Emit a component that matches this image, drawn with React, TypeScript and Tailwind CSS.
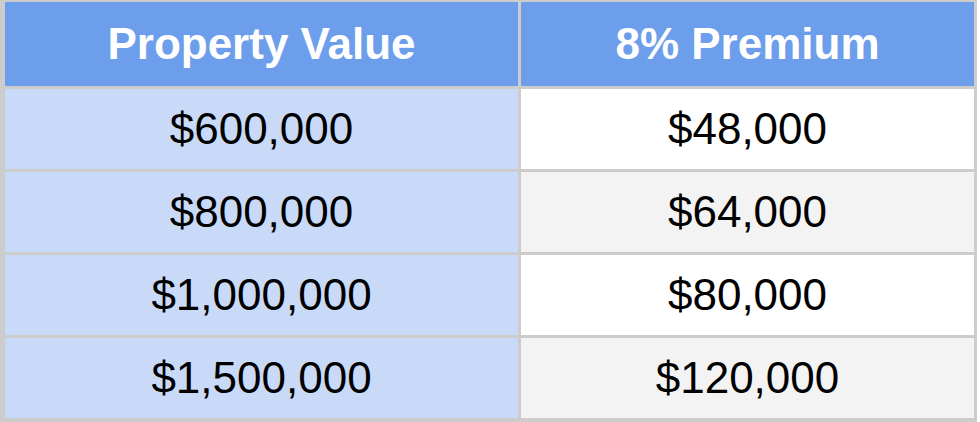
import React from 'react';

const rows = [
  { value: '$600,000', premium: '$48,000' },
  { value: '$800,000', premium: '$64,000' },
  { value: '$1,000,000', premium: '$80,000' },
  { value: '$1,500,000', premium: '$120,000' },
];

const App: React.FC = () => {
  return (
    <div className="w-[980px] h-[422px] bg-white" style={{ fontFamily: '"Liberation Sans", Arial, sans-serif' }}>
      <div className="w-[977px] bg-[#cccccc] pt-[2px] pl-[5px] pr-[3px] pb-[4px]">
        <div className="grid grid-cols-[513px_453px] gap-[3px] text-[44px] leading-none">
          {/* Header */}
          <div className="h-[84px] bg-[#6d9eeb] text-white font-bold flex items-center justify-center">
            Property Value
          </div>
          <div className="h-[84px] bg-[#6d9eeb] text-white font-bold flex items-center justify-center">
            8% Premium
          </div>

          {/* Rows */}
          {rows.map((row, i) => (
            <React.Fragment key={row.value}>
              <div className="h-[80px] bg-[#c9daf8] text-black flex items-center justify-center">
                {row.value}
              </div>
              <div
                className={`h-[80px] text-black flex items-center justify-center ${
                  i % 2 === 0 ? 'bg-white' : 'bg-[#f3f3f3]'
                }`}
              >
                {row.premium}
              </div>
            </React.Fragment>
          ))}
        </div>
      </div>
    </div>
  );
};

export default App;
